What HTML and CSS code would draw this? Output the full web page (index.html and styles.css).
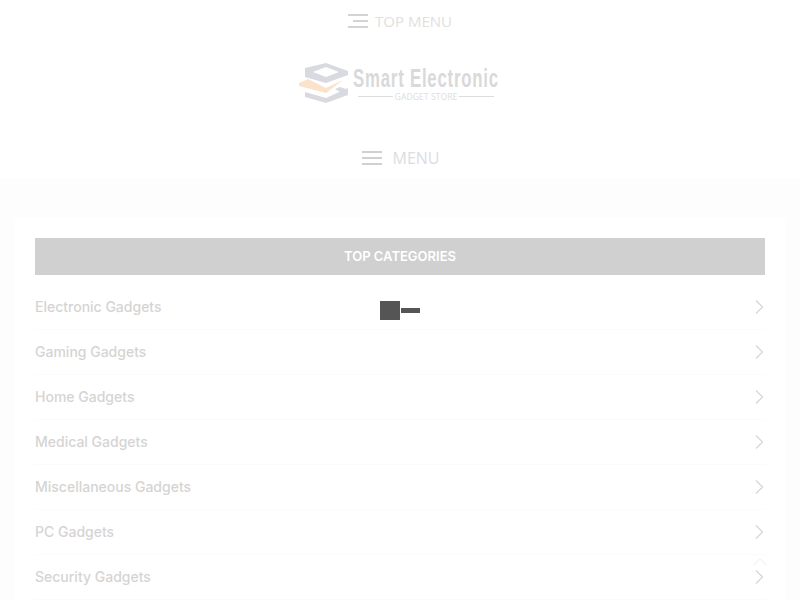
FILE: index.html
```html
<!DOCTYPE html>
<html lang="en">
<head>
<meta charset="utf-8">
<title>Smart Electronic</title>
<link rel="stylesheet" href="styles.css">
</head>
<body>
<header class="site-header">
  <div class="top-menu">
    <svg class="burger" width="20" height="14" viewBox="0 0 20 14"><path d="M0 1h20M5 7h15M0 13h20" stroke="#d3d3d6" stroke-width="2" fill="none"/></svg>
    <span>TOP MENU</span>
  </div>
  <div class="logo">
    <svg class="logo-mark" width="50" height="41" viewBox="0 0 50 41">
      <path d="M6 5 27 0 49 8v4L27 20 6 14zM14 9l13 5 13-5-13-5z" fill="#d9dae0" fill-rule="evenodd"/>
      <path d="M0 20l9-4 18 9 17-8-17 13L0 23z" fill="#fbe2cc"/>
      <path d="M6 29l21 6 22-10v7l-22 8L6 34zM36 26l5-2 6 2-6 3z" fill="#d9dae0"/>
    </svg>
    <div class="logo-text">
      <div class="logo-name">Smart Electronic</div>
      <div class="logo-tag"><i></i><span>GADGET STORE</span><i></i></div>
    </div>
  </div>
  <div class="main-menu">
    <svg class="burger" width="20" height="14" viewBox="0 0 20 14"><path d="M0 1h20M0 7h20M0 13h20" stroke="#d0d0d2" stroke-width="2" fill="none"/></svg>
    <span>MENU</span>
  </div>
</header>
<main class="content">
  <section class="card">
    <h2 class="card-title">TOP CATEGORIES</h2>
    <ul class="cat-list">
      <li><a>Electronic Gadgets</a><svg class="chev" width="9" height="14" viewBox="0 0 9 14"><path d="M1 .500 7.500 7 1 13.500" stroke="#d6d6dc" stroke-width="1.300" fill="none"/></svg></li>
      <li><a>Gaming Gadgets</a><svg class="chev" width="9" height="14" viewBox="0 0 9 14"><path d="M1 .500 7.500 7 1 13.500" stroke="#d6d6dc" stroke-width="1.300" fill="none"/></svg></li>
      <li><a>Home Gadgets</a><svg class="chev" width="9" height="14" viewBox="0 0 9 14"><path d="M1 .500 7.500 7 1 13.500" stroke="#d6d6dc" stroke-width="1.300" fill="none"/></svg></li>
      <li><a>Medical Gadgets</a><svg class="chev" width="9" height="14" viewBox="0 0 9 14"><path d="M1 .500 7.500 7 1 13.500" stroke="#d6d6dc" stroke-width="1.300" fill="none"/></svg></li>
      <li><a>Miscellaneous Gadgets</a><svg class="chev" width="9" height="14" viewBox="0 0 9 14"><path d="M1 .500 7.500 7 1 13.500" stroke="#d6d6dc" stroke-width="1.300" fill="none"/></svg></li>
      <li><a>PC Gadgets</a><svg class="chev" width="9" height="14" viewBox="0 0 9 14"><path d="M1 .500 7.500 7 1 13.500" stroke="#d6d6dc" stroke-width="1.300" fill="none"/></svg></li>
      <li><a>Security Gadgets</a><svg class="chev" width="9" height="14" viewBox="0 0 9 14"><path d="M1 .500 7.500 7 1 13.500" stroke="#d6d6dc" stroke-width="1.300" fill="none"/></svg></li>
    </ul>
  </section>
</main>
<div class="preloader"><span class="pre-square"></span><span class="pre-bar"></span></div>
<svg class="to-top" width="14" height="8" viewBox="0 0 14 8"><path d="M0 7 7 1l7 6" stroke="#f7f7f7" stroke-width="2" fill="none"/></svg>
</body>
</html>
```
FILE: styles.css
```css
html, body {
  margin: 0;
  padding: 0;
  height: 600px;
  overflow: hidden;
  background: #fdfdfd;
}
.site-header {
  height: 179px;
  background: #fff;
  display: flex;
  flex-direction: column;
  align-items: center;
  font-family: "Open Sans", sans-serif;
}
.top-menu {
  flex: none;
  height: 41px;
  display: flex;
  align-items: center;
  gap: 7px;
  font-size: 15px;
  color: #e2e0de;
}
.logo {
  flex: none;
  margin-top: 19px;
  margin-right: 2px;
  height: 46px;
  display: flex;
  align-items: center;
  gap: 4px;
}
.logo-mark {
  flex: none;
  display: block;
}
.logo-text {
  flex: none;
  width: 146px;
  display: flex;
  flex-direction: column;
  align-items: center;
}
.logo-name {
  font-family: "Liberation Sans", sans-serif;
  font-weight: 700;
  font-size: 26px;
  line-height: 27px;
  letter-spacing: 1.200px;
  color: #d9d9d9;
  white-space: nowrap;
  transform: scaleX(0.645);
}
.logo-tag {
  display: flex;
  align-items: center;
  gap: 2px;
  font-size: 8.700px;
  line-height: 10px;
  color: #dedede;
}
.logo-tag i {
  display: block;
  flex: none;
  width: 35px;
  height: 1px;
  background: #dcdcdc;
}
.main-menu {
  flex: none;
  margin-top: 27px;
  padding-left: 1px;
  height: 50px;
  display: flex;
  align-items: center;
  gap: 11px;
  font-size: 16px;
  color: #dcdde2;
}
.burger { display: block; }
.content {
  padding: 39px 15px 0;
}
.card {
  background: #fff;
  padding: 20px;
  height: 400px;
  box-sizing: border-box;
}
.card-title {
  margin: 0;
  height: 37px;
  line-height: 37px;
  background: #d0d0d0;
  color: #fff;
  font-family: Inter, sans-serif;
  font-size: 13px;
  font-weight: 600;
  text-align: center;
}
.cat-list {
  list-style: none;
  margin: 10px 0 0;
  padding: 0;
}
.cat-list li {
  height: 44px;
  border-bottom: 1px solid #fbfbfb;
  display: flex;
  align-items: center;
  justify-content: space-between;
  padding-right: 1px;
  font-family: Inter, sans-serif;
  font-size: 14px;
  font-weight: 500;
  color: #d6d4d3;
}
.cat-list a { margin-bottom: 2px; }
.chev { display: block; }
.preloader {
  position: absolute;
  left: 380px;
  top: 301px;
  display: flex;
  align-items: center;
  gap: 1px;
}
.pre-square {
  width: 20px;
  height: 19px;
  background: #555;
}
.pre-bar {
  width: 19px;
  height: 5px;
  background: #555;
}
.to-top {
  position: absolute;
  left: 753px;
  top: 558px;
}
```
